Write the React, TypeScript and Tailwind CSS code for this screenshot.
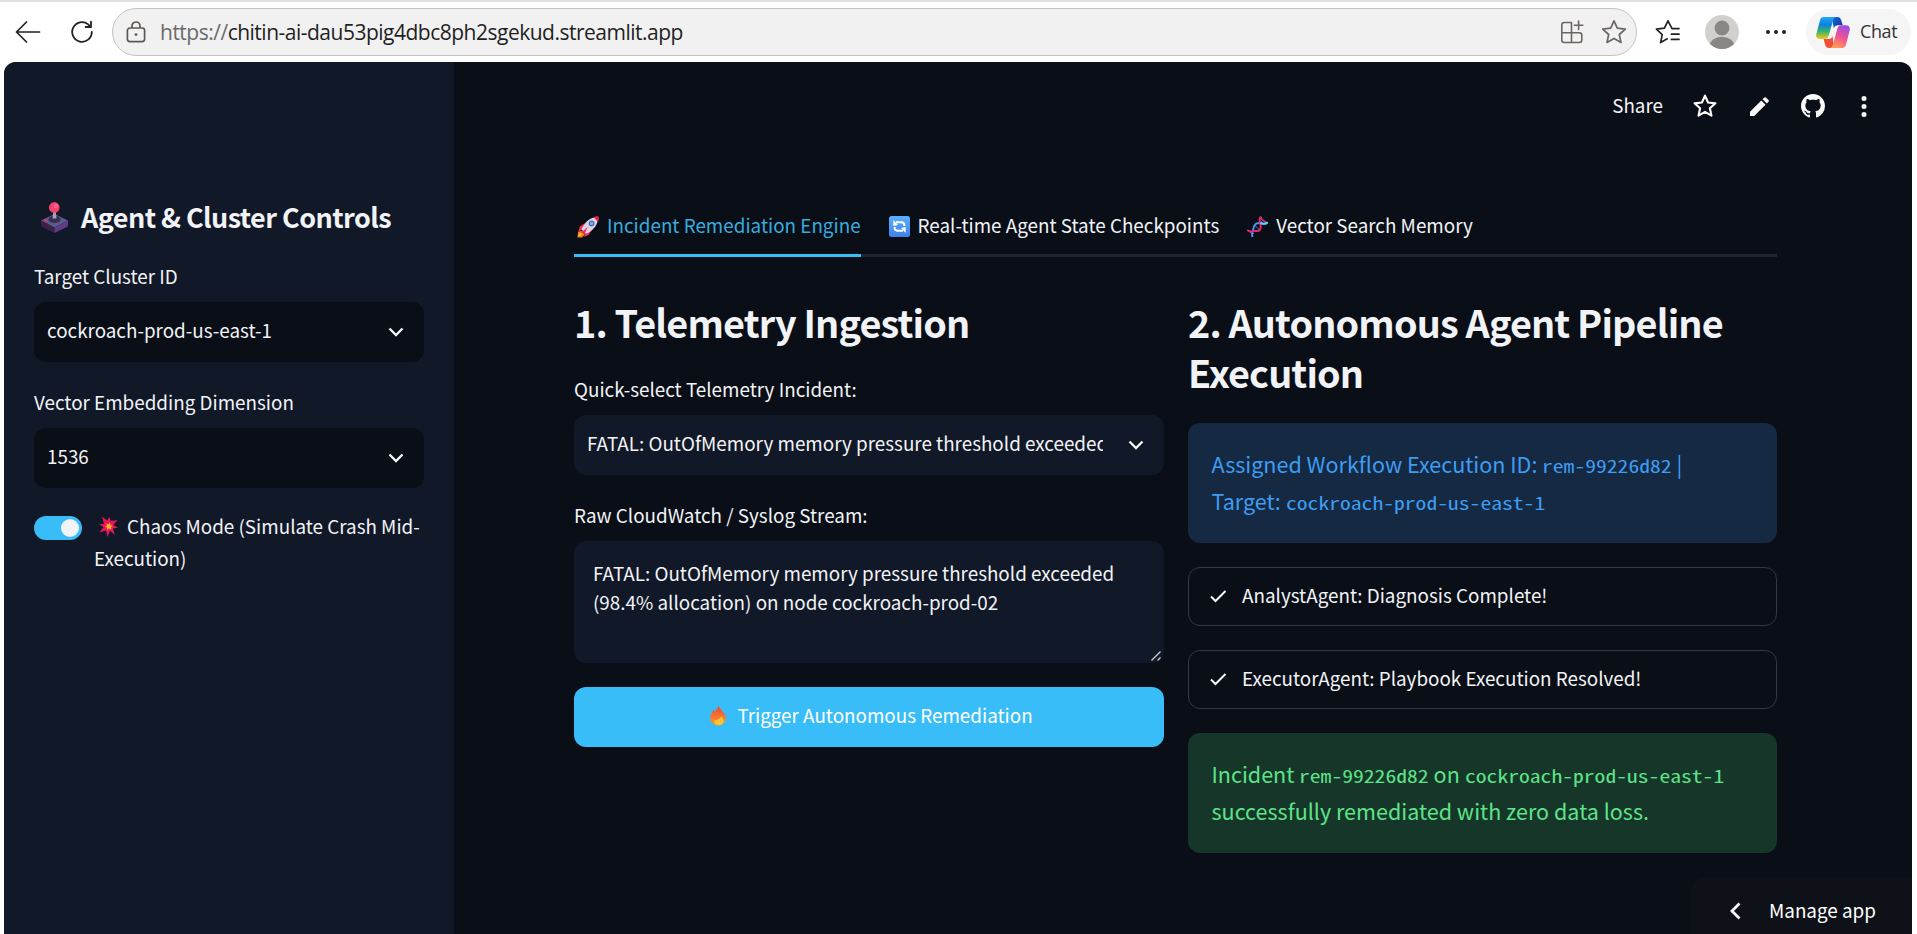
import type { ReactNode } from "react";

const SANS = "font-['Noto_Sans_CJK_SC','Noto_Sans',sans-serif]";
const MONO = "font-['Noto_Sans_Mono_CJK_SC','Liberation_Mono',monospace]";

function BackIcon() {
  return (
    <svg width="26" height="22" viewBox="0 0 26 22" fill="none" stroke="#222" strokeWidth="1.7" strokeLinecap="round" strokeLinejoin="round">
      <path d="M24.5 11H1.5M11.5 1 1.5 11l10 10" />
    </svg>
  );
}

function ReloadIcon() {
  return (
    <svg width="24" height="24" viewBox="0 0 24 24" fill="none" stroke="#222" strokeWidth="1.8" strokeLinecap="round" strokeLinejoin="round">
      <path d="M21.8 12a9.8 9.8 0 1 1-3.6-7.6L20.6 7" />
      <path d="M21 1.6V7h-5.4" />
    </svg>
  );
}

function LockIcon() {
  return (
    <svg width="20" height="22" viewBox="0 0 20 22" fill="none" stroke="#5c5855" strokeWidth="1.7">
      <rect x="1.4" y="7" width="17.2" height="13.6" rx="2.6" />
      <path d="M6 7V5a4 4 0 0 1 8 0v2" />
      <circle cx="10" cy="13.6" r="1.4" fill="#5c5855" stroke="none" />
    </svg>
  );
}

function AppsIcon() {
  return (
    <svg width="24" height="24" viewBox="0 0 24 24" fill="none" stroke="#6b6663" strokeWidth="1.6" strokeLinecap="round" strokeLinejoin="round">
      <path d="M11.5 2.5H4.2a2.4 2.4 0 0 0-2.4 2.4v15.2a2.4 2.4 0 0 0 2.4 2.4h15.2a2.4 2.4 0 0 0 2.4-2.4v-5a2.4 2.4 0 0 0-2.4-2.4H1.8M11.5 2.5v20" />
      <path d="M18.6 1v8.4M14.4 5.2h8.4" />
    </svg>
  );
}

function StarIcon({ color, width, size }: { color: string; width: number; size: number }) {
  return (
    <svg width={size} height={size} viewBox="0 0 26 26" fill="none" stroke={color} strokeWidth={width} strokeLinejoin="round">
      <path d="M13 1.8l3.3 7.4 8 .9-6 5.4 1.7 7.9-7-4-7 4 1.7-7.9-6-5.4 8-.9z" />
    </svg>
  );
}

function FavoritesIcon() {
  return (
    <svg width="26" height="26" viewBox="0 0 26 26" fill="none" stroke="#222" strokeWidth="1.7" strokeLinecap="round" strokeLinejoin="round">
      <path d="M24 9.6h-7L13 1.8 9.4 9.2l-8 1 5.8 5.4-1.6 8 6.6-3.8" />
      <path d="M16.4 15.2H24M16.4 20.4H24" />
    </svg>
  );
}

function Avatar() {
  return (
    <svg width="34" height="34" viewBox="0 0 34 34">
      <clipPath id="avatar-clip">
        <circle cx="17" cy="17" r="17" />
      </clipPath>
      <g clipPath="url(#avatar-clip)">
        <rect width="34" height="34" fill="#d2d0cd" />
        <circle cx="17" cy="13" r="7.4" fill="#8a8683" />
        <ellipse cx="17" cy="31" rx="12.4" ry="9.2" fill="#8a8683" />
      </g>
    </svg>
  );
}

function CopilotIcon() {
  return (
    <svg width="34" height="31" viewBox="0 0 34 31">
      <defs>
        <linearGradient id="cp-a" x1="0" y1="0" x2="0" y2="1">
          <stop offset="0" stopColor="#1fa7f2" />
          <stop offset=".35" stopColor="#0c7fe0" />
          <stop offset=".65" stopColor="#35b56a" />
          <stop offset="1" stopColor="#f7c516" />
        </linearGradient>
        <linearGradient id="cp-b" x1=".7" y1="0" x2=".3" y2="1">
          <stop offset="0" stopColor="#a04be8" />
          <stop offset=".5" stopColor="#f05390" />
          <stop offset="1" stopColor="#ffa055" />
        </linearGradient>
        <linearGradient id="cp-c" x1="0" y1="0" x2="1" y2="1">
          <stop offset="0" stopColor="#1b62dc" />
          <stop offset="1" stopColor="#12379c" />
        </linearGradient>
      </defs>
      <path d="M16 0h5.500c2 0 3 1 3.600 3l1.700 5.300h-5c-2 0-3.300 1-4 3z" fill="url(#cp-c)" />
      <path d="M18 31h-5c-2 0-3.200-1-3.800-3L7.600 22h5.200c2 0 3.200-1 3.800-3z" fill="#f0503a" />
      <path d="M7.500 0h13.200c-2 0-3 1.400-3.600 3.400l-4.500 15.300c-.7 2.300-2 3.300-4.300 3.300H4.200C.8 22-.4 19.700.4 16.700L4 3.200C4.600 1.200 5.700 0 7.500 0z" fill="url(#cp-a)" />
      <path d="M26.500 31H13.300c2 0 3-1.400 3.600-3.400l4.500-16c.7-2.300 2-3.300 4.300-3.300h4.100c3.400 0 4.600 2.300 3.800 5.300L30 27.800c-.6 2-1.700 3.200-3.500 3.200z" fill="url(#cp-b)" />
    </svg>
  );
}

function Joystick() {
  return (
    <svg width="27" height="31" viewBox="0 0 27 31">
      <path d="M0 18.500 13.500 12 27 18.500 13.500 25.500z" fill="#5d5a8c" />
      <path d="M0 18.500 13.500 25.500V31L1.500 25.300Q0 24.500 0 23z" fill="#3a2347" />
      <path d="M27 18.500 13.500 25.500V31l12-5.700Q27 24.500 27 23z" fill="#5f3c86" />
      <ellipse cx="13.600" cy="17.400" rx="6" ry="3.600" fill="#39304f" />
      <path d="M12.400 8h2.300l.8 8.600h-3.900z" fill="#a79dc0" />
      <circle cx="13.300" cy="5.400" r="5.300" fill="#f5416c" />
      <circle cx="15" cy="4" r="2.400" fill="#ff7096" opacity=".7" />
      <circle cx="4.600" cy="18.300" r="1.500" fill="#e0315e" />
    </svg>
  );
}

function Collision() {
  return (
    <svg width="19" height="21" viewBox="0 0 19 21">
      <path d="M3 .5 8 4.500 10.500 1l1.200 4L18.500 4l-4.200 5 4.700 2.500-5.200 1L16 19l-5-4-2.500 6L7 14.500.3 16.500 4.500 11 0 8.500l5-.8z" fill="#e3155f" />
      <path d="M6 7 9 7.500 10.500 5l1 3 3-.6-2 2.600 3 1.500-3.500.5.800 2.500-3-1.500L8.500 16l-.7-3.500-3 .5 2-2.500-2-1.500 2.200-.3z" fill="#f52340" />
      <path d="M7.300 7.600l2 .8L11 6.800l.5 2.400 2.300.5-1.700 1.400.2 2.300-2.200-1-2 1.500v-2.300L6 10.800l2-.8z" fill="#ffb02e" />
    </svg>
  );
}

function Rocket() {
  return (
    <svg width="22" height="22" viewBox="0 0 22 22">
      <path d="M1 15.500 5.500 15l2 4L5 21.500H.500z" fill="#f5791d" />
      <path d="M1 21 2.500 17l3 1z" fill="#ffc83d" />
      <path d="M8 7 2.800 10.500 1.500 15.500l4.500-2zM15 14l-3.500 5-4.500 2 2-5z" fill="#f2305f" />
      <path d="M18.500 1.200C12 2 7.500 6.500 4.500 13.500l4.500 4.300C15.500 15 20 10 21 3.500z" fill="#dcd3e3" />
      <path d="M16.500 1Q19.500-.3 21.600.4 22.300 3 21 6z" fill="#e8254f" />
      <circle cx="14.600" cy="7.400" r="2.900" fill="#4e6fb8" />
      <circle cx="14.600" cy="7.400" r="1.700" fill="#73aef0" />
      <path d="M10.500 11 4 17l3-.3L7 20z" fill="#f2305f" />
    </svg>
  );
}

function SyncEmoji() {
  return (
    <svg width="21" height="21" viewBox="0 0 21 21">
      <defs>
        <linearGradient id="sync-bg" x1="0" y1="0" x2="0" y2="1">
          <stop offset="0" stopColor="#5ab0fd" />
          <stop offset="1" stopColor="#3f80ea" />
        </linearGradient>
      </defs>
      <rect width="21" height="21" rx="2.500" fill="url(#sync-bg)" />
      <g fill="none" stroke="#fff" strokeWidth="2">
        <path d="M7 6.200h5q3.400 0 3.400 3.400v.4M14 14.800H9q-3.400 0-3.400-3.400V11" />
      </g>
      <path d="M4.300 4v6l4.700-1zM16.700 17v-6l-4.700 1z" fill="#fff" />
    </svg>
  );
}

function Dna() {
  return (
    <svg width="21" height="21" viewBox="0 0 21 21" fill="none" strokeLinecap="round">
      <path d="M8 9.500l4 3.800M3 16l2.600 2.600M4.300 15.500l2 2M14.500 3l3.800 4M14 5.200l2 2" stroke="#5b6fd0" strokeWidth="1" />
      <path d="M5.300 20.200C4.600 16.500 6.300 15 6.500 12 6.800 8.500 10 6.600 13 7S18 8.800 20.200 6.800" stroke="#3f9bf7" strokeWidth="2" />
      <path d="M1 14.500C3.500 16.800 6.500 14.500 9 15 12.800 15.600 14.200 12.500 13.600 9.500 13 6.500 11.600 4.500 13.400 1.200" stroke="#e6286c" strokeWidth="2" />
      <path d="M14 1.200q.4 2.300 3 3.600t3.200 2" stroke="#e6286c" strokeWidth="1.300" />
      <path d="M14 7.200q3.800 1.400 6.200-.4" stroke="#58cdf9" strokeWidth="2" />
    </svg>
  );
}

function Fire() {
  return (
    <svg width="16" height="21" viewBox="0 0 17 21">
      <defs>
        <linearGradient id="fire-bg" x1="0" y1="0" x2="0" y2="1">
          <stop offset="0" stopColor="#ee4630" />
          <stop offset="1" stopColor="#ff9a35" />
        </linearGradient>
      </defs>
      <path d="M9 0c1 4 7.800 7.500 7.800 13.500C16.800 18 13 21 8.500 21S.2 18 .2 13.500C.2 9.500 2.500 7 4 4.500c.5 1 .5 1.500.6 2C6.500 5 8.500 3 9 0z" fill="url(#fire-bg)" />
      <path d="M12 11c.4 1.500 2.500 2.700 2.500 5.300 0 2.600-2.500 4.400-5.700 4.400s-4.300-1.700-4.300-3.700c0-1.300 1-1.800 2.300-2 2.500-.3 4.500-1.500 5.200-4z" fill="#ffc62e" />
    </svg>
  );
}

function Chevron() {
  return (
    <svg width="16" height="11" viewBox="0 0 16 11" fill="none" stroke="#f5f6f8" strokeWidth="2.300" className="shrink-0">
      <path d="M1.500 1.500 8 8l6.500-6.500" />
    </svg>
  );
}

function Check() {
  return (
    <svg width="17" height="13" viewBox="0 0 17 13" fill="none" stroke="#f5f6f8" strokeWidth="2" className="shrink-0">
      <path d="M1 6.500 5.500 11 15.500 1" />
    </svg>
  );
}

function BrowserBar() {
  return (
    <div className="flex h-[62px] shrink-0 flex-col bg-white">
      <div className="h-[2px] bg-[#e0e0e0]" />
      <div className="flex h-[60px] items-center pl-[15px]">
        <BackIcon />
        <div className="ml-[29px]"><ReloadIcon /></div>
        <div className="-mt-[1px] ml-[18px] flex h-12 w-[1525px] items-center rounded-full border-[1.500px] border-[#c3c3c3] bg-[#f1f1f1] pr-[9px] pl-[13px]">
          <LockIcon />
          <div className="ml-[14px] flex-1 font-['Open_Sans','Noto_Sans',sans-serif] text-[21px] leading-[30px] tracking-[-0.5px] whitespace-nowrap text-[#1f1f1f]">
            <span className="text-[#6b6b6b]">https://</span>chitin-ai-dau53pig4dbc8ph2sgekud.streamlit.app
          </div>
          <AppsIcon />
          <div className="ml-[17px]"><StarIcon color="#6b6663" width={1.7} size={26} /></div>
        </div>
        <div className="ml-[18px]"><FavoritesIcon /></div>
        <div className="ml-[24px]"><Avatar /></div>
        <div className="ml-[27px] flex gap-[4px]">
          <i className="size-[4px] rounded-full bg-[#222]" />
          <i className="size-[4px] rounded-full bg-[#222]" />
          <i className="size-[4px] rounded-full bg-[#222]" />
        </div>
        <div className="ml-[20px] flex h-[46px] w-[105px] items-center rounded-full bg-[#f5f5f5] pl-[10px]">
          <CopilotIcon />
          <span className="-mt-[2px] ml-[10px] font-['Open_Sans','Noto_Sans',sans-serif] text-[18px] tracking-[-0.4px] text-[#333]">Chat</span>
        </div>
      </div>
    </div>
  );
}

function SideSelect({ label, value }: { label: string; value: string }) {
  return (
    <div className="mt-[26px]">
      <div className="h-7 leading-7">{label}</div>
      <div className="mt-3 flex h-[60px] items-center justify-between rounded-xl bg-[#0a0e17] pr-[20px] pl-[13px]">
        <span className="-mt-[3px]">{value}</span>
        <Chevron />
      </div>
    </div>
  );
}

function Sidebar() {
  return (
    <aside className="w-[450px] shrink-0 bg-[#111827] pt-[135px] pr-[30px] pl-[30px]">
      <h2 className="-mb-[1px] flex h-10 items-center text-[27px] leading-10 font-semibold tracking-[-0.57px] whitespace-nowrap">
        <span className="mr-[13px] ml-[7px]"><Joystick /></span>
        Agent &amp; Cluster Controls
      </h2>
      <SideSelect label="Target Cluster ID" value="cockroach-prod-us-east-1" />
      <SideSelect label="Vector Embedding Dimension" value="1536" />
      <div className="mt-[22px] flex">
        <div className="mt-[6px] flex h-6 w-12 shrink-0 items-center justify-end rounded-full bg-[#38bdf8] pr-[3px]">
          <i className="size-[18px] rounded-full bg-[#f1f3f6]" />
        </div>
        <p className="ml-[12px] leading-[31.500px] whitespace-nowrap">
          <span className="mr-[9px] ml-[5px] inline-block align-[-3px]"><Collision /></span>
          Chaos Mode (Simulate Crash Mid-
          <br />
          Execution)
        </p>
      </div>
    </aside>
  );
}

function Tab({ icon, children, active }: { icon: ReactNode; children: ReactNode; active?: boolean }) {
  return (
    <div className={active ? "flex h-[55px] items-start border-b-[3px] border-[#38bdf8] pl-[3px] text-[#38acdf]" : "flex h-[55px] items-start pl-[3px]"}>
      <span className="mt-[14px]">{icon}</span>
      <span className="ml-[8px] leading-[46px] whitespace-nowrap">{children}</span>
    </div>
  );
}

function Telemetry() {
  return (
    <section className="w-[590px]">
      <h3 className="h-[50px] text-[37.800px] leading-[50px] font-semibold tracking-[-0.86px]">1. Telemetry Ingestion</h3>
      <div className="mt-7 h-7 leading-7">Quick-select Telemetry Incident:</div>
      <div className="mt-3 flex h-[60px] items-center justify-between rounded-xl bg-[#111827] pr-[20px] pl-[13px]">
        <span className="-mt-[3px] w-[516px] overflow-hidden whitespace-nowrap">
          FATAL: OutOfMemory memory pressure threshold exceeded
        </span>
        <Chevron />
      </div>
      <div className="mt-[26px] h-7 leading-7">Raw CloudWatch / Syslog Stream:</div>
      <div className="mt-3 flex h-[122px] items-end rounded-xl bg-[#111827] pr-[3px] pb-[2px] pl-[19px]">
        <p className="flex-1 self-start pt-[17px] leading-[29.400px] whitespace-nowrap">
          FATAL: OutOfMemory memory pressure threshold exceeded
          <br />
          (98.4% allocation) on node cockroach-prod-02
        </p>
        <svg width="10" height="10" viewBox="0 0 10 10" stroke="#c9ccd1" strokeWidth="1.400">
          <path d="M.500 9.500l9-9M6.500 9.500l3-3" />
        </svg>
      </div>
      <button className="mt-6 flex h-[60px] w-full items-center justify-center rounded-xl bg-[#38bdf8] pl-[5px] text-white">
        <span className="-mt-[3px] mr-[11px]"><Fire /></span>
        <span className="-mt-[3px]">Trigger Autonomous Remediation</span>
      </button>
    </section>
  );
}

function RunId() {
  return <code className={`${MONO} mr-[21.600px] inline-block origin-left scale-x-120 text-[18px]`}>rem-99226d82</code>;
}

function ClusterId() {
  return <code className={`${MONO} mr-[43.200px] inline-block origin-left scale-x-120 text-[18px]`}>cockroach-prod-us-east-1</code>;
}

function Status({ children }: { children: ReactNode }) {
  return (
    <div className="mb-6 flex h-[59px] items-center rounded-xl border border-[#343843] pl-[21px]">
      <Check />
      <span className="-mt-[3px] ml-[15px] whitespace-nowrap">{children}</span>
    </div>
  );
}

function Pipeline() {
  return (
    <section className="w-[589px]">
      <h3 className="h-[100px] text-[37.800px] leading-[50px] font-semibold tracking-[-0.86px] whitespace-nowrap">
        2. Autonomous Agent Pipeline
        <br />
        Execution
      </h3>
      <div className="mt-[26px] mb-6 h-[120px] rounded-xl bg-[#152943] pt-[23px] pl-[23.500px] text-[21.540px] leading-9 whitespace-nowrap text-[#3d9df3]">
        Assigned Workflow Execution ID: <RunId /> |
        <br />
        Target: <ClusterId />
      </div>
      <Status>AnalystAgent: Diagnosis Complete!</Status>
      <Status>ExecutorAgent: Playbook Execution Resolved!</Status>
      <div className="h-[120px] rounded-xl bg-[#163629] pt-[23px] pl-[23.500px] text-[21.540px] leading-9 whitespace-nowrap text-[#5de488]">
        Incident <RunId /> on <ClusterId />
        <br />
        successfully remediated with zero data loss.
      </div>
    </section>
  );
}

function Header() {
  return (
    <header className="flex h-[88px] items-center justify-end pr-[45px]">
      <span className="-mt-[2px]">Share</span>
      <span className="ml-[30px]"><StarIcon color="#fafafa" width={2.3} size={24} /></span>
      <svg className="ml-[33px]" width="19" height="19" viewBox="0 0 19 19" fill="#fafafa">
        <path d="M0 19v-4.200L11.300 3.500l4.200 4.200L4.200 19zM12.600 2.200 14.300.500q.8-.7 1.600 0l2.600 2.600q.7.800 0 1.600l-1.700 1.700z" />
      </svg>
      <svg className="ml-[32px]" width="24" height="24" viewBox="0 0 16 16" fill="#fafafa">
        <path d="M8 0C3.580 0 0 3.580 0 8c0 3.540 2.290 6.530 5.470 7.590.4.070.55-.17.55-.38 0-.19-.01-.82-.01-1.490-2.010.37-2.530-.49-2.690-.94-.09-.23-.48-.94-.82-1.130-.28-.15-.68-.52-.01-.53.63-.01 1.080.58 1.230.82.72 1.210 1.870.87 2.330.66.070-.52.28-.87.51-1.070-1.780-.2-3.640-.89-3.640-3.950 0-.87.31-1.590.82-2.150-.08-.2-.36-1.020.08-2.120 0 0 .67-.21 2.200.82.64-.18 1.320-.27 2-.27s1.360.09 2 .27c1.530-1.040 2.200-.82 2.200-.82.44 1.100.16 1.920.08 2.120.51.56.82 1.270.82 2.150 0 3.070-1.870 3.750-3.650 3.950.29.25.54.73.54 1.480 0 1.070-.01 1.930-.01 2.200 0 .21.15.46.55.38A8.010 8.010 0 0 0 16 8c0-4.420-3.580-8-8-8z" />
      </svg>
      <svg className="ml-[36px]" width="6" height="21" viewBox="0 0 6 21" fill="#fafafa">
        <circle cx="3" cy="2.600" r="2.500" />
        <circle cx="3" cy="10.500" r="2.500" />
        <circle cx="3" cy="18.400" r="2.500" />
      </svg>
    </header>
  );
}

export default function App() {
  return (
    <div className="flex h-[934px] w-[1917px] flex-col overflow-hidden bg-white">
      <BrowserBar />
      <div className={`relative ml-1 flex w-[1908px] flex-1 overflow-hidden rounded-t-[12px] bg-[#0a0e17] text-[18.840px] text-[#f1f3f6] ${SANS}`}>
        <Sidebar />
        <main className="flex-1">
          <Header />
          <div className="ml-[120px] w-[1203px]">
            <nav className="mt-[52px] flex h-[55px] gap-[25px] shadow-[inset_0_-3px_0_#20242f]">
              <Tab icon={<Rocket />} active>Incident Remediation Engine</Tab>
              <Tab icon={<SyncEmoji />}>Real-time Agent State Checkpoints</Tab>
              <Tab icon={<Dna />}>Vector Search Memory</Tab>
            </nav>
            <div className="mt-10 flex gap-6">
              <Telemetry />
              <Pipeline />
            </div>
          </div>
        </main>
        <div className="absolute right-0 bottom-0 flex h-[56px] w-[221px] items-center rounded-tl-xl bg-[#0e1117] pt-[10px] pl-[39px] text-white">
          <svg width="11" height="18" viewBox="0 0 11 18" fill="none" stroke="#fff" strokeWidth="2.800">
            <path d="M9.500 1.500 2 9l7.500 7.500" />
          </svg>
          <span className="-mt-[2px] ml-[28px]">Manage app</span>
        </div>
      </div>
    </div>
  );
}
